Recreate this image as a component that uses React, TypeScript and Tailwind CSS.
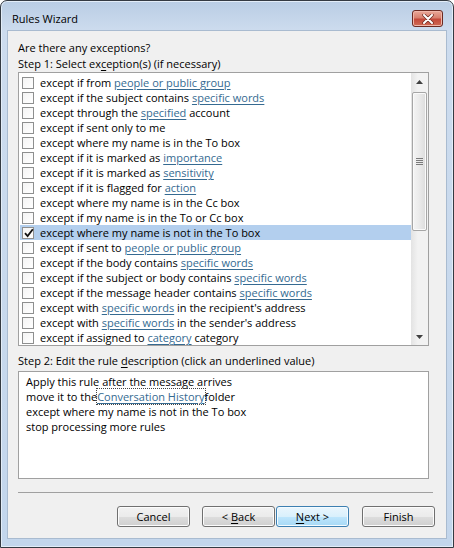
import type { ReactNode } from "react";

type Seg = [string, boolean?];

const rows: Seg[][] = [
  [["except if from "], ["people or public group", true]],
  [["except if the subject contains "], ["specific words", true]],
  [["except through the "], ["specified", true], [" account"]],
  [["except if sent only to me"]],
  [["except where my name is in the To box"]],
  [["except if it is marked as "], ["importance", true]],
  [["except if it is marked as "], ["sensitivity", true]],
  [["except if it is flagged for "], ["action", true]],
  [["except where my name is in the Cc box"]],
  [["except if my name is in the To or Cc box"]],
  [["except where my name is not in the To box"]],
  [["except if sent to "], ["people or public group", true]],
  [["except if the body contains "], ["specific words", true]],
  [["except if the subject or body contains "], ["specific words", true]],
  [["except if the message header contains "], ["specific words", true]],
  [["except with "], ["specific words", true], [" in the recipient's address"]],
  [["except with "], ["specific words", true], [" in the sender's address"]],
  [["except if assigned to "], ["category", true], [" category"]],
];

const SELECTED = 10;

const Link = ({ children }: { children: ReactNode }) => (
  <span className="text-[#356a91] underline decoration-[#356a91] underline-offset-2">{children}</span>
);

const Checkbox = ({ checked }: { checked: boolean }) => (
  <span className="relative flex h-[12px] w-[12px] shrink-0 border border-[#8e8f8f] bg-gradient-to-br from-[#f4f4f4] to-white">
    {checked ? (
      <svg viewBox="0 0 12 12" className="absolute left-[0px] top-[-1px] h-[12px] w-[12px]">
        <path d="M2 6.2 L4.6 9 L9.8 2.2" fill="none" stroke="#111" strokeWidth="1.8" />
      </svg>
    ) : null}
  </span>
);

const Button = ({ children, primary }: { children: ReactNode; primary?: boolean }) => (
  <button
    type="button"
    className={
      primary
        ? "flex h-[21px] w-[73px] items-center justify-center rounded-[3px] border border-[#3c7fb1] bg-[linear-gradient(#eaf6fd_0%,#d9f0fc_50%,#bee6fd_51%,#a7d9f5_100%)] text-[11px] text-black shadow-[inset_0_0_0_1px_#f4fbff]"
        : "flex h-[21px] w-[73px] items-center justify-center rounded-[3px] border border-[#707070] bg-[linear-gradient(#f2f2f2_0%,#ebebeb_50%,#dddddd_51%,#cfcfcf_100%)] text-[11px] text-black shadow-[inset_0_0_0_1px_#fcfcfc]"
    }
  >
    {children}
  </button>
);

export default function App() {
  return (
    <div className="h-[548px] w-[454px] overflow-hidden bg-white font-['Open_Sans','Noto_Sans',sans-serif] text-[11px] leading-[15px] text-black">
      <div className="flex h-[548px] w-[454px] flex-col rounded-t-[7px] border border-[#343a42] bg-[linear-gradient(#b9cde4_0%,#cddcee_30px,#c3d6ec_100%)] shadow-[inset_0_0_0_1px_#e3edf8]">
        {/* title bar */}
        <div className="flex h-[28px] shrink-0 items-start justify-between pl-[11px] pr-[10px]">
          <span className="pt-[10px] text-[11px] leading-[16px] text-black">Rules Wizard</span>
          <span className="mt-[9px] flex h-[17px] w-[31px] items-center justify-center rounded-[3px] border border-[#6b2a22] bg-[linear-gradient(#eaa99a_0%,#d8806e_45%,#c4493a_55%,#cf6b55_100%)] shadow-[inset_0_0_0_1px_#f0b7aa]">
            <svg viewBox="0 0 12 10" className="h-[10px] w-[12px]">
              <path d="M2 1 L10 9 M10 1 L2 9" stroke="#6b2a22" strokeWidth="3.4" strokeLinecap="round" />
              <path d="M2 1 L10 9 M10 1 L2 9" stroke="#ffffff" strokeWidth="2" strokeLinecap="round" />
            </svg>
          </span>
        </div>

        {/* client area */}
        <div className="mx-[6px] mb-[8px] mt-[1px] flex flex-1 flex-col border border-[#a9bbd0] bg-[#f0f0f0] pl-[10px] pr-[11px]">
          <div className="mt-[9px] leading-[16px]">Are there any exceptions?</div>
          <div className="leading-[16px]">
            Step 1: Select ex<span className="underline underline-offset-2">c</span>eption(s) (if necessary)
          </div>

          {/* list */}
          <div className="mt-[0px] flex h-[274px] w-[411px] border border-[#a0a0a0] bg-white">
            <div className="flex flex-1 flex-col pt-[2px]">
              {rows.map((segs, i) => (
                <div
                  key={i}
                  className={
                    i === SELECTED
                      ? "ml-[1px] flex h-[15px] items-center gap-[6px] bg-[#b3cfee] pl-[2px]"
                      : "ml-[1px] flex h-[15px] items-center gap-[6px] pl-[2px]"
                  }
                >
                  <Checkbox checked={i === SELECTED} />
                  <span className="whitespace-pre">
                    {segs.map(([t, link], j) => (link ? <Link key={j}>{t}</Link> : <span key={j}>{t}</span>))}
                  </span>
                </div>
              ))}
            </div>

            {/* scrollbar */}
            <div className="flex w-[17px] shrink-0 flex-col bg-[linear-gradient(90deg,#e3e3e3,#f2f2f2_40%,#f2f2f2)]">
              <div className="flex h-[17px] items-center justify-center">
                <svg viewBox="0 0 7 4" className="h-[4px] w-[7px]">
                  <path d="M0 4 L3.5 0 L7 4 Z" fill="#404040" />
                </svg>
              </div>
              <div className="mx-[1px] mt-[2px] flex h-[139px] items-center justify-center rounded-[2px] border border-[#a6a6a6] bg-[linear-gradient(90deg,#f4f4f4,#ebebeb_45%,#dcdcdc)] shadow-[inset_0_0_0_1px_#fafafa]">
                <div className="flex w-[7px] flex-col gap-[1px]">
                  <span className="h-[1px] bg-[#7a7a7a]" />
                  <span className="h-[1px] bg-[#7a7a7a]" />
                  <span className="h-[1px] bg-[#7a7a7a]" />
                  <span className="h-[1px] bg-[#7a7a7a]" />
                </div>
              </div>
              <div className="flex-1" />
              <div className="flex h-[17px] items-center justify-center">
                <svg viewBox="0 0 7 4" className="h-[4px] w-[7px]">
                  <path d="M0 0 L7 0 L3.5 4 Z" fill="#404040" />
                </svg>
              </div>
            </div>
          </div>

          <div className="mt-[7px] leading-[16px]">
            Step 2: Edit the rule <span className="underline underline-offset-2">d</span>escription (click an underlined value)
          </div>

          {/* description */}
          <div className="mt-[2px] flex h-[108px] w-[411px] flex-col border border-[#a0a0a0] bg-white pl-[7px] pt-[2px]">
            <div>Apply this rule after the message arrives</div>
            <div className="whitespace-pre">
              move it to the<span className="outline outline-1 outline-dotted outline-[#444]"><Link>Conversation History</Link></span>folder
            </div>
            <div>except where my name is not in the To box</div>
            <div>stop processing more rules</div>
          </div>

          {/* separator */}
          <div className="mt-[13px] h-[2px] w-[415px] border-t border-[#a0a0a0] border-b-white" />

          {/* buttons */}
          <div className="mt-[12px] flex justify-end">
            <Button>Cancel</Button>
            <div className="ml-[12px]">
              <Button>
                &lt; <span className="ml-[3px] underline underline-offset-2">B</span>ack
              </Button>
            </div>
            <div className="ml-[1px]">
              <Button primary>
                <span className="underline underline-offset-2">N</span>ext &gt;
              </Button>
            </div>
            <div className="ml-[13px]">
              <Button>Finish</Button>
            </div>
          </div>
        </div>
      </div>
    </div>
  );
}
